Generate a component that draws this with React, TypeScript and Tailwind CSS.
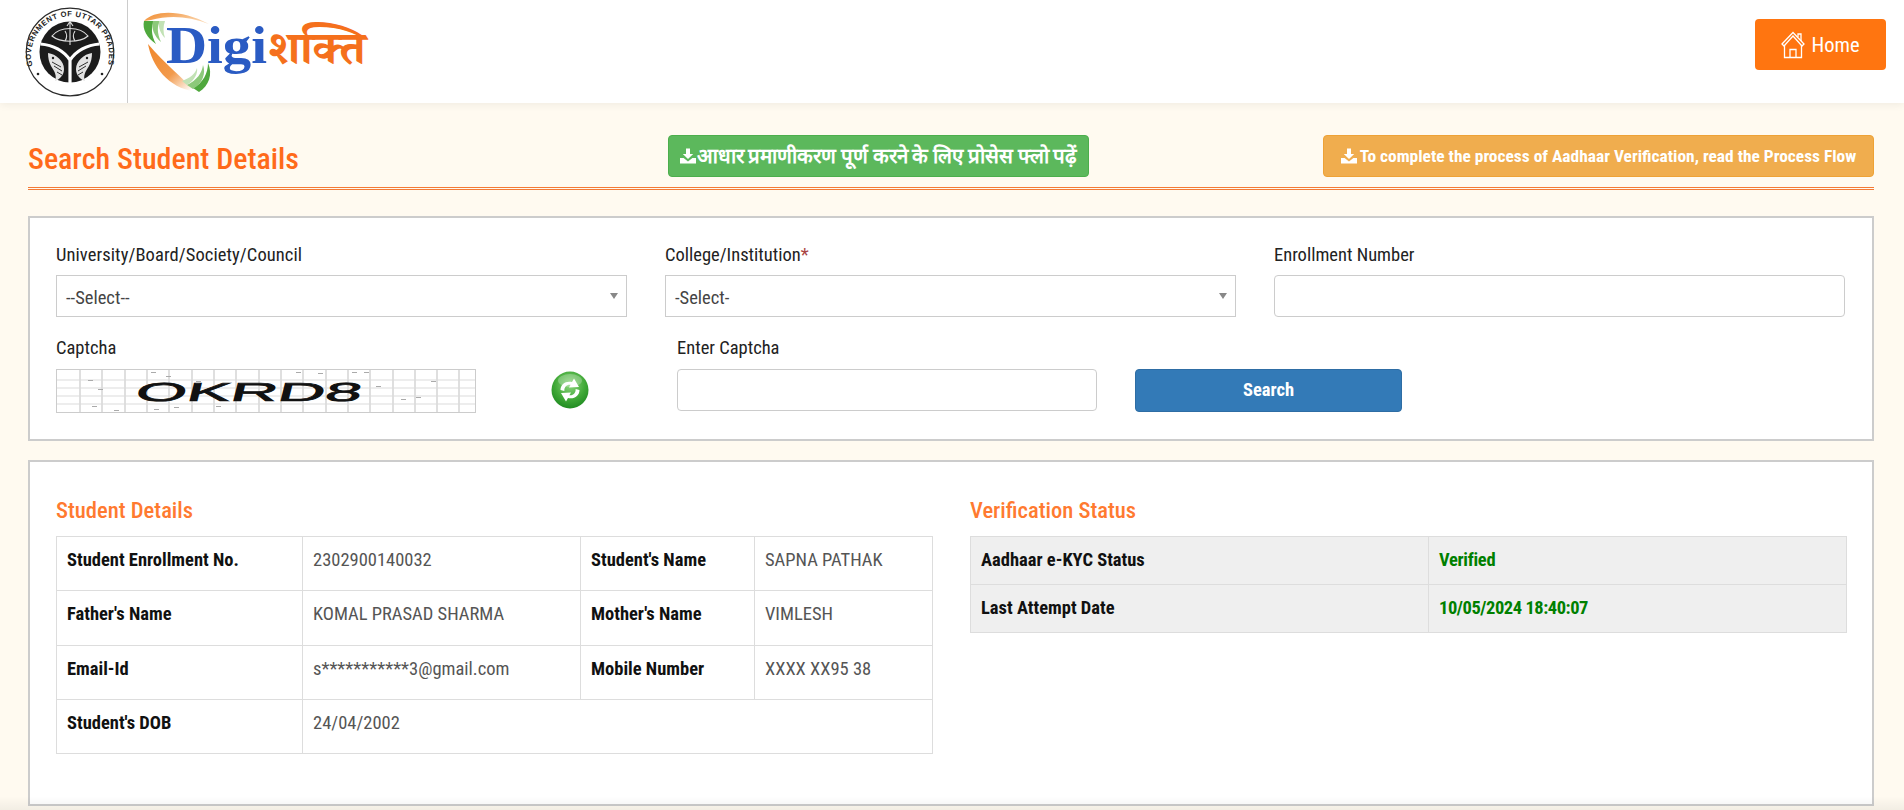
import React from "react";

function Seal() {
  return (
    <svg width="92" height="92" viewBox="0 0 92 92" className="block shrink-0 overflow-visible">
      <defs>
        <path id="sealArc" d="M 8.5 60 A 39 39 0 1 1 83.5 60" />
      </defs>
      <circle cx="46" cy="46" r="43.8" fill="#fff" stroke="#2a2a2a" strokeWidth="1.2" />
      <text fontFamily="'Liberation Sans', sans-serif" fontWeight="700" fontSize="7.6" fill="#222" letterSpacing="0.55">
        <textPath href="#sealArc">GOVERNMENT OF UTTAR PRADESH</textPath>
      </text>
      <circle cx="14" cy="68" r="1.3" fill="#222" />
      <circle cx="78" cy="68" r="1.3" fill="#222" />
      <circle cx="46" cy="46" r="30.5" fill="#1c1c1c" />
      <path d="M16.5 38 C28 39 39 44 46 54 C53 44 64 39 75.5 38 M46 54 V77" fill="none" stroke="#fff" strokeWidth="3.2" />
      <path d="M28 30 C36 20 56 20 64 30 C56 37 36 37 28 30 Z" fill="none" stroke="#ddd" strokeWidth="1.2" />
      <path d="M46 16 V39 M43 20 L46 15.5 L49 20 M41 25 C43 28 43 32 41 35 M51 25 C49 28 49 32 51 35" fill="none" stroke="#ddd" strokeWidth="1.1" />
      <g fill="#e2e2e2">
        <path d="M24 47 C32 48 40 55 40 63 C40 69 36 73 31 75 C33 70 31 66 27 60 C25 56 24 52 24 47 Z" />
        <path d="M68 47 C60 48 52 55 52 63 C52 69 56 73 61 75 C59 70 61 66 65 60 C67 56 68 52 68 47 Z" />
      </g>
      <g fill="#1c1c1c">
        <circle cx="29" cy="52" r="1.2" />
        <circle cx="63" cy="52" r="1.2" />
        <path d="M28 56 L37 61 M30 60 L38 65 M33 66 L38 69 M64 56 L55 61 M62 60 L54 65 M59 66 L54 69" stroke="#1c1c1c" strokeWidth="0.9" fill="none" />
      </g>
    </svg>
  );
}

function Logo() {
  return (
    <svg width="232" height="92" viewBox="0 0 232 92" className="block shrink-0 overflow-visible">
      <defs>
        <linearGradient id="swTop" x1="0" y1="0" x2="1" y2="0.5">
          <stop offset="0" stopColor="#f08a2c" />
          <stop offset="1" stopColor="#fbd5ad" />
        </linearGradient>
        <linearGradient id="swBot" x1="0" y1="0" x2="0.9" y2="1">
          <stop offset="0" stopColor="#f0862a" />
          <stop offset="0.6" stopColor="#f29a4c" />
          <stop offset="1" stopColor="#fff" />
        </linearGradient>
      </defs>
      <path d="M1 15 C12 3 40 4 66 18 C46 10 26 9 8 14 Z" fill="url(#swTop)" />
      <path d="M1 15 C-1 23 4 32 13 38 C8 29 8 21 11 15 Z" fill="#4fa83d" />
      <path d="M10 15 C8 22 11 30 18 36 C14 27 14 20 17 15 Z" fill="#8cc97a" />
      <path d="M16 15 C15 22 18 28 22 32 C20 26 20 21 22 15 Z" fill="#c2e2b5" />
      <path d="M5 38 C9 60 25 82 52 85.5 C40 72 22 58 5 38 Z" fill="url(#swBot)" />
      <g transform="translate(0 -4)">
        <path d="M56 90 C66 84 70 72 65 61 C65 71 60 81 50 86 Z" fill="#4fa83d" />
        <path d="M50 87 C60 81 63 71 60 63 C59 71 54 78 44 83 Z" fill="#8cc97a" />
        <path d="M44 83 C52 78 55 71 54 66 C52 72 47 76 39 79 Z" fill="#c2e2b5" />
      </g>
      <text x="23" y="57" fontFamily="'Liberation Serif', serif" fontWeight="700" fontSize="53" fill="#2a5bc3" textLength="101" lengthAdjust="spacingAndGlyphs">Digi</text>
      <text x="125" y="58" fontFamily="'Noto Serif Devanagari', 'Noto Sans Devanagari', 'Liberation Serif', serif" fontWeight="700" fontSize="46.5" fill="#f5701c">शक्ति</text>
    </svg>
  );
}

function HomeIcon() {
  return (
    <svg width="24" height="28" viewBox="0 0 24 28" fill="none" stroke="#fff" strokeWidth="1.3" className="block">
      <path d="M1 13 L12 1.5 L23 13 L21 15 L12 5 L3 15 Z" />
      <path d="M17 6 V3 H20 V10" />
      <path d="M3.5 14 V26.5 H20.5 V14" />
      <path d="M9 26.5 V18.5 H15 V26.5" />
    </svg>
  );
}

function DownloadIcon({ size = 16 }: { size?: number }) {
  return (
    <svg width={size} height={size} viewBox="0 0 16 16" fill="#fff" className="inline-block shrink-0">
      <path d="M6 0.5 H10 V6 H13.2 L8 11 L2.8 6 H6 Z" />
      <path d="M0 10 H3.6 L8 13.6 L12.4 10 H16 V15.5 H0 Z" />
    </svg>
  );
}

function Refresh() {
  return (
    <svg width="38" height="38" viewBox="0 0 38 38" className="block">
      <defs>
        <radialGradient id="rf" cx="0.5" cy="0.35" r="0.75">
          <stop offset="0" stopColor="#8fd67f" />
          <stop offset="0.55" stopColor="#3fa836" />
          <stop offset="1" stopColor="#14801a" />
        </radialGradient>
      </defs>
      <circle cx="19" cy="19" r="18.5" fill="url(#rf)" />
      <ellipse cx="19" cy="9.5" rx="12" ry="6.5" fill="#fff" opacity="0.25" />
      <path d="M9.5 19 C9.5 13 15 9.5 21 11 L23 7.5 L28 16 L18 16.5 L19.6 13.8 C16 13.2 13 16 13.4 20 Z" fill="#fff" />
      <path d="M28.5 19 C28.5 25 23 28.5 17 27 L15 30.5 L10 22 L20 21.5 L18.4 24.2 C22 24.8 25 22 24.6 18 Z" fill="#fff" />
    </svg>
  );
}

function Captcha() {
  const vs = [24, 46, 69, 91, 113, 136, 158, 180, 203, 225, 247, 270, 292, 314, 337, 359, 381, 403];
  const hs = [11, 19, 27, 35];
  const specks = [[32, 11], [42, 20], [36, 37], [58, 41], [95, 3], [110, 7], [98, 40], [118, 38], [160, 37], [240, 3], [262, 4], [296, 3], [308, 3], [320, 17], [345, 30], [360, 28], [375, 12], [140, 12]];
  return (
    <svg width="420" height="44" viewBox="0 0 420 44" className="block">
      <rect x="0.5" y="0.5" width="419" height="43" fill="#fff" stroke="#ccc" />
      {vs.map((x) => <line key={x} x1={x} y1="1" x2={x} y2="43" stroke="#d2d2d2" strokeWidth="1.4" />)}
      {hs.map((y) => <line key={y} x1="1" y1={y} x2="419" y2={y} stroke="#dcdcdc" strokeWidth="1.2" />)}
      {specks.map(([x, y], i) => <rect key={i} x={x} y={y} width="5" height="1" fill="#aaa" />)}
      <g transform="translate(74 32) skewX(-14)">
        <text x="4" y="0" fontFamily="'Liberation Sans', sans-serif" fontWeight="400" fontSize="26" fill="#111" stroke="#111" strokeWidth="0.7" textLength="226" lengthAdjust="spacingAndGlyphs">OKRD8</text>
      </g>
    </svg>
  );
}

function SelectBox({ text }: { text: string }) {
  return (
    <div className="flex h-[42px] items-center justify-between border border-[#ccc] bg-white pl-[9px] pr-[8px] text-[#444]">
      <span className="pt-[3px]">{text}</span>
      <span className="h-0 w-0 border-x-[4.5px] border-t-[6px] border-x-transparent border-t-[#888]" />
    </div>
  );
}

const th = "border border-[#ddd] px-[10px] pt-[10px] align-top font-bold text-[#111]";
const tdv = "border border-[#ddd] px-[10px] pt-[10px] align-top text-[#555]";
const th2 = "border border-[#ddd] px-[10px] pt-[10px] align-top font-bold text-[#111]";
const td2 = "border border-[#ddd] px-[10px] pt-[10px] align-top font-bold text-[#008000]";

export default function App() {
  return (
    <div className="relative h-[810px] overflow-hidden bg-[#fffaf0] text-[18.5px] leading-[26px] text-[#222] font-['Roboto_Condensed','Roboto','Liberation_Sans',sans-serif] [font-stretch:75%]">
      <header className="flex h-[103px] justify-between bg-white pl-[24px] pr-[18px] shadow-[0_2px_8px_rgba(0,0,0,0.06)]">
        <div className="flex h-full items-center">
          <Seal />
          <div className="ml-[11px] h-full w-px bg-[#ccc]" />
          <div className="ml-[15px]"><Logo /></div>
        </div>
        <a className="mt-[19px] flex h-[51px] w-[131px] items-center justify-center gap-[6px] rounded-[4px] bg-[#ff7510] text-[20.5px] text-white [font-stretch:100%]">
          <HomeIcon />
          <span>Home</span>
        </a>
      </header>

      <main className="px-[28px] pt-[32px]">
        <div className="flex h-[55px] w-[1846px] items-start border-b-[3px] border-double border-[#f47a35]">
          <h1 className="mt-[8px] w-[640px] shrink-0 text-[30px] leading-[32px] font-medium text-[#ff6a1a]">Search Student Details</h1>
          <a className="flex h-[42px] w-[421px] items-center justify-center gap-[1px] rounded-[4px] border border-[#4cae4c] bg-[#5cb85c] text-[20.5px] font-bold text-white">
            <DownloadIcon />
            <span>आधार प्रमाणीकरण पूर्ण करने के लिए प्रोसेस फ्लो पढ़ें</span>
          </a>
          <a className="ml-auto flex h-[42px] w-[551px] items-center justify-center gap-[3px] rounded-[4px] border border-[#eea236] bg-[#f0ad4e] text-[17.4px] font-bold text-white">
            <DownloadIcon />
            <span>To complete the process of Aadhaar Verification, read the Process Flow</span>
          </a>
        </div>

        <section className="mt-[26px] h-[225px] w-[1846px] border-2 border-[#ccc] bg-white px-[26px] pt-[24px]">
          <div className="flex gap-[38px]">
            <div className="w-[571px]">
              <label className="block h-[33px] tracking-[0.09px]">University/Board/Society/Council</label>
              <SelectBox text="--Select--" />
            </div>
            <div className="w-[571px]">
              <label className="block h-[33px]">College/Institution<span className="text-[#a94442]">*</span></label>
              <SelectBox text="-Select-" />
            </div>
            <div className="w-[571px]">
              <label className="block h-[33px]">Enrollment Number</label>
              <div className="h-[42px] rounded-[4px] border border-[#ccc] bg-white" />
            </div>
          </div>
          <div className="mt-[16px] flex items-start">
            <div className="w-[420px]">
              <label className="block h-[36px] pt-[2px]">Captcha</label>
              <Captcha />
            </div>
            <div className="ml-[75px] mt-[38px] w-[126px]"><Refresh /></div>
            <div className="w-[420px]">
              <label className="block h-[36px] pt-[2px]">Enter Captcha</label>
              <div className="h-[42px] rounded-[4px] border border-[#ccc] bg-white" />
            </div>
            <button className="ml-[38px] mt-[36px] h-[43px] w-[267px] rounded-[4px] border border-[#2e6da4] bg-[#337ab7] pb-[2px] font-bold text-white">Search</button>
          </div>
        </section>

        <section className="mt-[19px] h-[346px] w-[1846px] border-2 border-[#ccc] bg-white px-[26px] pt-[34px]">
          <div className="flex gap-[38px]">
            <div className="w-[876px]">
              <h2 className="h-[40px] text-[22.6px] leading-[30px] font-medium text-[#ff7a30]">Student Details</h2>
              <table className="w-[876px] table-fixed border-collapse">
                <colgroup>
                  <col className="w-[246px]" />
                  <col className="w-[278px]" />
                  <col className="w-[174px]" />
                  <col className="w-[178px]" />
                </colgroup>
                <tbody>
                  <tr className="h-[54px]"><td className={th}>Student Enrollment No.</td><td className={tdv}>2302900140032</td><td className={th}>Student's Name</td><td className={tdv}>SAPNA PATHAK</td></tr>
                  <tr className="h-[55px]"><td className={th}>Father's Name</td><td className={tdv}>KOMAL PRASAD SHARMA</td><td className={th}>Mother's Name</td><td className={tdv}>VIMLESH</td></tr>
                  <tr className="h-[54px]"><td className={th}>Email-Id</td><td className={tdv}>s***********3@gmail.com</td><td className={th}>Mobile Number</td><td className={tdv}>XXXX XX95 38</td></tr>
                  <tr className="h-[54px]"><td className={th}>Student's DOB</td><td className={tdv} colSpan={3}>24/04/2002</td></tr>
                </tbody>
              </table>
            </div>
            <div className="w-[876px]">
              <h2 className="h-[40px] text-[22.6px] leading-[30px] font-medium text-[#ff7a30]">Verification Status</h2>
              <table className="w-[876px] table-fixed border-collapse bg-[#efefef]">
                <colgroup>
                  <col className="w-[458px]" />
                  <col className="w-[418px]" />
                </colgroup>
                <tbody>
                  <tr className="h-[48px]"><td className={th2}>Aadhaar e-KYC Status</td><td className={`${td2} tracking-[-0.3px]`}>Verified</td></tr>
                  <tr className="h-[48px]"><td className={th2}>Last Attempt Date</td><td className={`${td2} tracking-[-0.45px]`}>10/05/2024 18:40:07</td></tr>
                </tbody>
              </table>
            </div>
          </div>
        </section>
      </main>
      <div className="pointer-events-none absolute inset-x-0 bottom-0 h-[14px] bg-gradient-to-b from-transparent to-[rgba(0,0,0,0.05)]" />
    </div>
  );
}
